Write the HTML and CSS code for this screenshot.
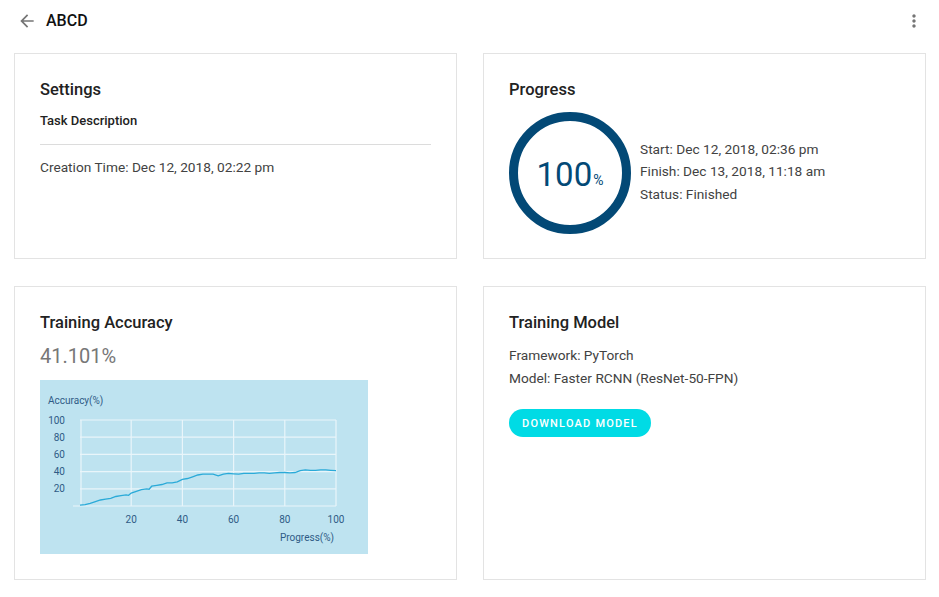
FILE: index.html
```html
<!DOCTYPE html>
<html>
<head>
<meta charset="utf-8">
<link rel="stylesheet" href="styles.css">
</head>
<body>
<header class="topbar">
  <svg class="back" viewBox="0 0 24 24" width="20" height="20"><path d="M20 11H7.83l5.59-5.59L12 4l-8 8 8 8 1.41-1.41L7.83 13H20v-2z" fill="#757575"/></svg>
  <h1 class="page-title">ABCD</h1>
  <svg class="more" viewBox="0 0 24 24" width="20" height="20"><path d="M12 8c1.1 0 2-.9 2-2s-.9-2-2-2-2 .9-2 2 .9 2 2 2zm0 2c-1.1 0-2 .9-2 2s.9 2 2 2 2-.9 2-2-.9-2-2-2zm0 6c-1.1 0-2 .9-2 2s.9 2 2 2 2-.9 2-2-.9-2-2-2z" fill="#757575"/></svg>
</header>
<main class="grid">
  <section class="card">
    <h2 class="card-title">Settings</h2>
    <div class="subhead">Task Description</div>
    <hr class="divider">
    <div class="line">Creation Time: Dec 12, 2018, 02:22 pm</div>
  </section>
  <section class="card">
    <h2 class="card-title">Progress</h2>
    <div class="progress-row">
      <div class="ring">
        <svg viewBox="0 0 124 124" width="124" height="124"><circle cx="62" cy="62" r="56.5" fill="none" stroke="#034976" stroke-width="9"/></svg>
        <div class="ring-label"><span class="big">100</span><span class="pct">%</span></div>
      </div>
      <div class="info">
        <div class="line">Start: Dec 12, 2018, 02:36 pm</div>
        <div class="line">Finish: Dec 13, 2018, 11:18 am</div>
        <div class="line">Status: Finished</div>
      </div>
    </div>
  </section>
  <section class="card">
    <h2 class="card-title">Training Accuracy</h2>
    <div class="metric">41.101%</div>
    <div class="chart">
      <svg viewBox="0 0 328 174" width="328" height="174">
        <g stroke="#e9f5fa" stroke-width="1.2" fill="none">
          <line x1="40" y1="40" x2="296" y2="40"/>
          <line x1="40" y1="57.2" x2="296" y2="57.2"/>
          <line x1="40" y1="74.4" x2="296" y2="74.4"/>
          <line x1="40" y1="91.6" x2="296" y2="91.6"/>
          <line x1="40" y1="108.8" x2="296" y2="108.8"/>
          <line x1="33" y1="126" x2="296" y2="126"/>
          <line x1="41" y1="40" x2="41" y2="126"/>
          <line x1="91.2" y1="40" x2="91.2" y2="126"/>
          <line x1="142.4" y1="40" x2="142.4" y2="126"/>
          <line x1="193.6" y1="40" x2="193.6" y2="126"/>
          <line x1="244.8" y1="40" x2="244.8" y2="126"/>
          <line x1="296" y1="40" x2="296" y2="126"/>
        </g>
        <polyline fill="none" stroke="#2aaad8" stroke-width="1.3" points="40,125.1 45.1,124.7 50.2,123.4 55.4,121.7 60.5,120 65.6,119.1 70.7,118.3 75.8,116.5 81,115.7 86.1,114.8 88.6,115.3 91.2,113.1 96.3,111.4 101.4,109.7 106.6,108.8 109.1,109.2 111.7,106.2 116.8,105.4 121.9,104.5 127,102.8 132.2,102.8 137.3,101.9 142.4,99.3 147.5,98.5 152.6,96.8 157.8,95 162.9,94.2 168,94.2 173.1,94.2 178.2,95.9 183.4,94.2 188.5,93.3 193.6,93.8 198.7,94.2 203.8,93.3 209,93.3 214.1,93.3 219.2,92.9 224.3,92.9 229.4,93.3 234.6,92.9 239.7,92.5 244.8,92.5 249.9,92.9 255,92.5 260.2,90.7 265.3,89.9 270.4,90.3 275.5,90.3 280.6,89.9 285.8,89.9 290.9,90.3 296,90.7"/>
        <g class="axis-text">
          <text x="8" y="24">Accuracy(%)</text>
          <text x="25" y="43.5" text-anchor="end">100</text>
          <text x="25" y="60.7" text-anchor="end">80</text>
          <text x="25" y="77.9" text-anchor="end">60</text>
          <text x="25" y="95.1" text-anchor="end">40</text>
          <text x="25" y="112.3" text-anchor="end">20</text>
          <text x="91.2" y="142.5" text-anchor="middle">20</text>
          <text x="142.4" y="142.5" text-anchor="middle">40</text>
          <text x="193.6" y="142.5" text-anchor="middle">60</text>
          <text x="244.8" y="142.5" text-anchor="middle">80</text>
          <text x="296" y="142.5" text-anchor="middle">100</text>
          <text x="267" y="160.5" text-anchor="middle">Progress(%)</text>
        </g>
      </svg>
    </div>
  </section>
  <section class="card">
    <h2 class="card-title">Training Model</h2>
    <div class="line">Framework: PyTorch</div>
    <div class="line">Model: Faster RCNN (ResNet-50-FPN)</div>
    <button class="download">DOWNLOAD MODEL</button>
  </section>
</main>
</body>
</html>
```
FILE: styles.css
```css
* { box-sizing: border-box; }
html, body { margin: 0; padding: 0; background: #fff; }
body {
  font-family: Roboto, "Noto Sans", Arial, sans-serif;
  color: #3d3d3d;
  width: 939px;
}
.topbar {
  height: 41px;
  display: flex;
  align-items: center;
  padding: 0 15px 0 17px;
}
.back { flex: none; }
.page-title {
  margin: 0 0 0 9px;
  font-size: 16px;
  font-weight: 500;
  color: #111;
  flex: 1;
}
.grid {
  display: grid;
  grid-template-columns: 443px 443px;
  grid-template-rows: 206px 294px;
  column-gap: 26px;
  row-gap: 27px;
  padding: 12px 0 0 14px;
}
.card {
  border: 1px solid #e3e3e3;
  padding: 24px 25px 0 25px;
  background: #fff;
}
.card-title {
  margin: 0;
  font-size: 16.5px;
  line-height: 24px;
  font-weight: 500;
  color: #222;
}
.subhead {
  margin-top: 10px;
  font-size: 13px;
  line-height: 18px;
  font-weight: 500;
  color: #222;
}
.divider {
  border: 0;
  border-top: 1px solid #dcdcdc;
  margin: 14px 0 11px 0;
}
.line {
  font-size: 13.7px;
  line-height: 22.5px;
  color: #424242;
}
.progress-row {
  display: flex;
  align-items: center;
  margin-top: 9px;
  margin-left: -1px;
}
.ring {
  position: relative;
  width: 124px;
  height: 124px;
  flex: none;
}
.ring svg { display: block; }
.ring-label {
  position: absolute;
  inset: 0;
  display: flex;
  align-items: center;
  justify-content: center;
  color: #034976;
  padding-top: 2px;
}
.big { font-size: 33px; font-weight: 400; }
.pct { font-size: 14px; margin-top: 12px; margin-left: 1px; }
.info { margin-left: 8px; margin-top: -3px; }
.metric {
  margin-top: 8px;
  font-size: 20px;
  line-height: 26px;
  color: #777;
}
.chart {
  margin-top: 11px;
  width: 328px;
  height: 174px;
  background: #bee3f0;
}
.chart svg { display: block; }
.axis-text text {
  font-family: Roboto, "Noto Sans", Arial, sans-serif;
  font-size: 10px;
  fill: #2f5b86;
}
.card-title + .line { margin-top: 9px; }
.download {
  display: block;
  margin-top: 20px;
  width: 142px;
  height: 28px;
  border: 0;
  border-radius: 14px;
  background: #00dbe5;
  color: #fff;
  font-family: Roboto, "Noto Sans", Arial, sans-serif;
  font-size: 11px;
  font-weight: 500;
  letter-spacing: 1.2px;
  padding: 0;
}
```
